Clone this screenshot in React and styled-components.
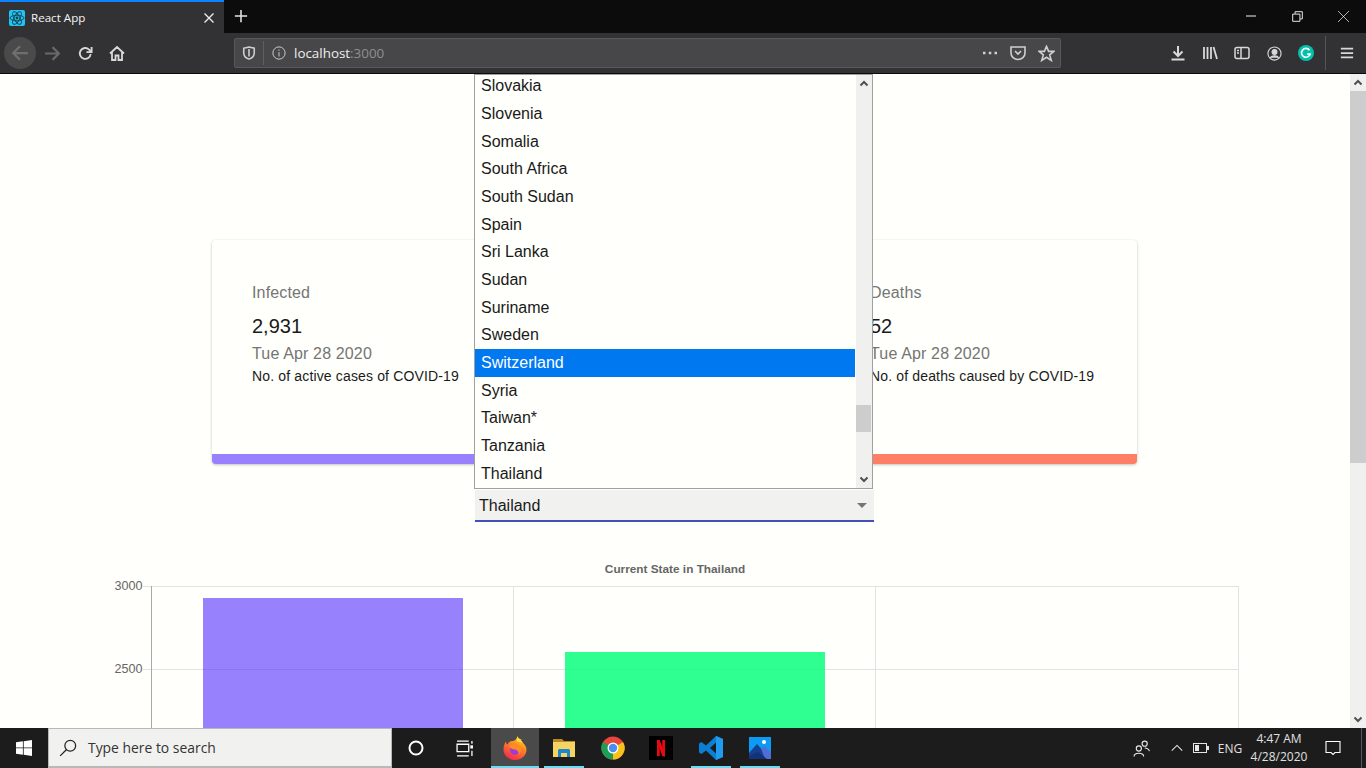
import React from 'react';
import styled, { createGlobalStyle } from 'styled-components';

const GlobalStyle = createGlobalStyle`
  html, body {
    margin: 0;
    padding: 0;
    height: 100%;
    overflow: hidden;
    background: #fffffb;
    font-family: "Liberation Sans", Arial, sans-serif;
  }
  #root { height: 100%; }
`;

const Shell = styled.div`
  height: 768px;
  display: flex;
  flex-direction: column;
  overflow: hidden;
`;

/* browser chrome */
const TabStrip = styled.div`
  height: 33px;
  flex: none;
  display: flex;
  align-items: flex-start;
  background: #0c0c0d;
  color: #f0f0f0;
`;

const Tab = styled.div`
  width: 224px;
  height: 33px;
  box-sizing: border-box;
  border-top: 2px solid #0a84ff;
  background: #323234;
  display: flex;
  align-items: center;
  padding: 0 9px;
  gap: 6px;
  font-family: "Open Sans", sans-serif;
  font-size: 11.6px;
  color: #f5f5f5;
`;

const TabTitle = styled.span`
  flex: 1;
`;

const IconSlot = styled.div`
  width: ${(p) => p.$w || 32}px;
  height: ${(p) => p.$h || 32}px;
  flex: none;
  display: flex;
  align-items: center;
  justify-content: center;
`;

const StripFill = styled.div`
  flex: 1;
`;

const NavBar = styled.div`
  height: 41px;
  flex: none;
  box-sizing: border-box;
  border-bottom: 1px solid #0c0c0d;
  background: #323234;
  display: flex;
  align-items: center;
  padding-left: 4px;
`;

const BackCircle = styled(IconSlot)`
  background: #4a4a4b;
  border-radius: 50%;
`;

const NavGap = styled.div`
  width: ${(p) => p.$w}px;
  flex: none;
`;

const UrlBar = styled.div`
  width: 827px;
  height: 30px;
  box-sizing: border-box;
  flex: none;
  display: flex;
  align-items: center;
  background: #474749;
  border: 1px solid #59595b;
  border-radius: 2px;
  font-family: "Open Sans", sans-serif;
  font-size: 13.4px;
  color: #eeeeee;
`;

const UrlDivider = styled.div`
  width: 1px;
  height: 24px;
  background: #5f5f62;
`;

const UrlText = styled.div`
  flex: 1;
  margin-left: 1px;
`;

const Port = styled.span`
  color: #8f8f92;
`;

const ToolDivider = styled.div`
  width: 1px;
  height: 34px;
  background: #55555a;
  margin: 0 5px 0 3px;
`;

/* page area */
const Viewport = styled.div`
  flex: 1;
  min-height: 0;
  display: flex;
`;

const Page = styled.main`
  flex: 1;
  min-width: 0;
  overflow: hidden;
  background: #fffffb;
  padding-top: 166px;
`;

const Cards = styled.div`
  width: 925px;
  margin-left: 212px;
  display: grid;
  grid-template-columns: repeat(3, 307px);
  gap: 2px;
`;

const Card = styled.article`
  height: 224px;
  box-sizing: border-box;
  background: #fffffb;
  border-bottom: 10px solid ${(p) => p.$accent};
  border-radius: 4px;
  box-shadow: 0 1px 3px rgba(0, 0, 0, 0.22), 0 0 2px rgba(0, 0, 0, 0.05);
  padding: 41px 40px 0;
`;

const CardLabel = styled.div`
  font-size: 16px;
  line-height: 24px;
  letter-spacing: 0.15px;
  color: #757575;
`;

const CardValue = styled.div`
  font-size: 20px;
  line-height: 28px;
  margin-top: 7px;
  color: #1a1a1a;
`;

const CardDate = styled.div`
  font-size: 16px;
  line-height: 24px;
  letter-spacing: 0.15px;
  margin-top: 2px;
  color: #757575;
`;

const CardNote = styled.div`
  font-size: 14px;
  line-height: 20px;
  letter-spacing: 0.15px;
  color: #1a1a1a;
  white-space: nowrap;
`;

const SelectBox = styled.div`
  position: relative;
  width: 399px;
  height: 32px;
  box-sizing: border-box;
  margin: 26px 0 0 475px;
  padding: 1px 4px 0;
  display: flex;
  align-items: center;
  justify-content: space-between;
  background: #f1f1ef;
  border-bottom: 2px solid #4350b5;
  font-size: 16px;
  color: #1a1a1a;
`;

const Caret = styled.div`
  width: 0;
  height: 0;
  margin-right: 3px;
  border-left: 5px solid transparent;
  border-right: 5px solid transparent;
  border-top: 5px solid #757575;
`;

const Dropdown = styled.div`
  position: absolute;
  left: -1px;
  bottom: 31px;
  width: 399px;
  height: 415px;
  box-sizing: border-box;
  display: flex;
  background: #fffffb;
  border: 1px solid #a0a0a0;
`;

const OptionList = styled.ul`
  flex: 1;
  margin: 0 1px 0 0;
  padding: 0;
  list-style: none;
  overflow: hidden;
`;

const Option = styled.li`
  height: 27.67px;
  line-height: 27.67px;
  padding: 0 6px;
  font-size: 16px;
  color: ${(p) => (p.$active ? '#ffffff' : '#1a1a1a')};
  background: ${(p) => (p.$active ? '#0078f0' : 'transparent')};
  &:first-child {
    margin-top: -2.6px;
  }
`;

const MiniScroll = styled.div`
  width: 16px;
  flex: none;
  display: flex;
  flex-direction: column;
  align-items: center;
  background: #f0f0ee;
  position: relative;
`;

const MiniThumb = styled.div`
  position: absolute;
  top: 330px;
  left: 0;
  width: 15px;
  height: 27px;
  background: #cdcdcd;
`;

const ArrowCap = styled.div`
  height: ${(p) => p.$h || 17}px;
  width: 100%;
  flex: none;
  display: flex;
  align-items: center;
  justify-content: center;
  margin-top: ${(p) => (p.$end ? 'auto' : '0')};
`;

const ChartWrap = styled.div`
  margin-top: 38px;
  margin-left: 100px;
`;

const PageScroll = styled.div`
  width: 16px;
  flex: none;
  display: flex;
  flex-direction: column;
  background: #f0f0ee;
`;

const PageThumb = styled.div`
  height: 372px;
  background: #cdcdcd;
`;

/* windows taskbar */
const Taskbar = styled.footer`
  height: 40px;
  flex: none;
  display: flex;
  align-items: stretch;
  background: #1c1c1c;
  color: #e8e8e8;
`;

const StartButton = styled(IconSlot)`
  height: 40px;
`;

const SearchBox = styled.div`
  width: 344px;
  box-sizing: border-box;
  flex: none;
  display: flex;
  align-items: center;
  gap: 11px;
  padding-left: 10px;
  background: #f1f1ef;
  border: 1px solid #b8b8b8;
  border-bottom-width: 2px;
  font-family: "Open Sans", sans-serif;
  font-size: 13.9px;
  color: #333333;
`;

const TaskApp = styled.div`
  width: ${(p) => p.$w || 48}px;
  flex: none;
  position: relative;
  display: flex;
  align-items: center;
  justify-content: center;
  background: ${(p) => (p.$active ? '#4a4a4a' : 'transparent')};
  &::after {
    content: '';
    display: ${(p) => (p.$open ? 'block' : 'none')};
    position: absolute;
    bottom: 0;
    left: 50%;
    width: ${(p) => (p.$active ? '100%' : '40px')};
    transform: translateX(-50%);
    height: 2px;
    background: #66dcf5;
  }
`;

const Tray = styled.div`
  margin-left: auto;
  display: flex;
  align-items: center;
  font-family: "Open Sans", sans-serif;
  font-size: 12px;
  color: #e0e0e0;
`;

const TrayItem = styled.div`
  width: ${(p) => p.$w}px;
  flex: none;
  display: flex;
  align-items: center;
  justify-content: center;
`;

const Clock = styled.div`
  width: 70px;
  flex: none;
  text-align: center;
  line-height: 18px;
`;

const Edge = styled.div`
  width: 5px;
  height: 40px;
  box-sizing: border-box;
  flex: none;
  border-left: 1px solid #5a5a5a;
`;

const countries = [
  'Slovakia', 'Slovenia', 'Somalia', 'South Africa', 'South Sudan', 'Spain', 'Sri Lanka', 'Sudan',
  'Suriname', 'Sweden', 'Switzerland', 'Syria', 'Taiwan*', 'Tanzania', 'Thailand',
];

const cards = [
  { label: 'Infected', value: '2,931', note: 'No. of active cases of COVID-19', accent: '#9980ff' },
  { label: 'Recovered', value: '2,609', note: 'No. of recoveries from COVID-19', accent: '#2dff8f' },
  { label: 'Deaths', value: '52', note: 'No. of deaths caused by COVID-19', accent: '#ff7f66' },
];

const Line = ({ children, size = 16, color = '#d4d4d4', width = 2 }) => (
  <svg width={size} height={size} viewBox="0 0 16 16" fill="none" stroke={color} strokeWidth={width}>
    {children}
  </svg>
);

const ReactIcon = () => (
  <svg width="16" height="16" viewBox="0 0 16 16">
    <rect width="16" height="16" rx="2" fill="#21c4f3" />
    <g fill="none" stroke="#12424f" strokeWidth="0.9">
      <ellipse cx="8" cy="8" rx="7" ry="2.8" />
      <ellipse cx="8" cy="8" rx="7" ry="2.8" transform="rotate(60 8 8)" />
      <ellipse cx="8" cy="8" rx="7" ry="2.8" transform="rotate(120 8 8)" />
    </g>
    <circle cx="8" cy="8" r="1.4" fill="#12424f" />
  </svg>
);

const Grammarly = () => (
  <svg width="16" height="16" viewBox="0 0 16 16">
    <circle cx="8" cy="8" r="8" fill="#05c0ac" />
    <path d="M11.5 5.2A4.4 4.4 0 1 0 12.2 9H9" fill="none" stroke="#ffffff" strokeWidth="1.6" />
  </svg>
);

const WindowsLogo = () => (
  <svg width="16" height="16" viewBox="0 0 16 16" fill="#ffffff">
    <path d="M0 2.3 6.9 1.3V7.5H0ZM7.7 1.2 16 0V7.5H7.7ZM0 8.3H6.9V14.7L0 13.7ZM7.7 8.3H16V16L7.7 14.8Z" />
  </svg>
);

const FirefoxLogo = () => (
  <svg width="24" height="24" viewBox="0 0 24 24">
    <defs>
      <linearGradient id="fx" x1="0.8" y1="0" x2="0.3" y2="1">
        <stop offset="0" stopColor="#ffe03c" />
        <stop offset="0.4" stopColor="#ff8a1f" />
        <stop offset="1" stopColor="#f5264f" />
      </linearGradient>
    </defs>
    <path d="M14.500 0c.5 2.500 2.500 3 4 3.500L18 5c3 2.500 5.500 5.500 5.500 8.500C23.500 19.500 18.500 24 12 24 5.500 24 .5 19.500.5 13.500.5 10 1.500 7.500 3 5.500 3 7 3.500 8 4.500 8.500 5.500 6.500 7 5 9 5c2 .5 4.500-1 5.500-5Z" fill="url(#fx)" />
    <circle cx="12" cy="14" r="5" fill="#a13bd6" />
    <path d="M6 10c2.500-2.500 9-3 11.500 1.500 1.500 3 0 6-2 7.500.8-2-.5-5-3.500-5.500-2.500-.3-5-1-6-3.500Z" fill="#ff8b24" />
    <path d="M14 1c1.500 2 4.500 3 6 6-2-1-4-1.500-6-1.500Z" fill="#ffe03c" />
  </svg>
);

const FolderLogo = () => (
  <svg width="22" height="18" viewBox="0 0 22 18">
    <path d="M0 0H9L11 2H22V5H0Z" fill="#b98a24" />
    <rect y="3" width="22" height="15" fill="#f7d360" />
    <path d="M5 18V11.500C5 10.500 6 10 7 10H15C16 10 17 10.500 17 11.500V18H14V14H8V18Z" fill="#1c86d1" />
  </svg>
);

const ChromeLogo = () => (
  <svg width="24" height="24" viewBox="0 0 24 24">
    <circle cx="12" cy="12" r="11.500" fill="#e8453c" />
    <path d="M12 12 22 6A11.500 11.500 0 0 1 12 23.500Z" fill="#f8c219" />
    <path d="M12 12 12 23.500A11.500 11.500 0 0 1 2 6Z" fill="#1f9d55" />
    <circle cx="12" cy="12" r="5.500" fill="#ffffff" />
    <circle cx="12" cy="12" r="4.200" fill="#4a8ef0" />
  </svg>
);

const NetflixLogo = () => (
  <svg width="24" height="24" viewBox="0 0 24 24">
    <rect width="24" height="24" fill="#000000" />
    <path d="M8 4H10.800L16 19.500V20.500L13.200 20Z" fill="#f50914" />
    <path d="M8 4H10.800V20L8 20.500ZM13.200 4H16V20.500L13.200 20Z" fill="#e50914" />
  </svg>
);

const CodeLogo = () => (
  <svg width="24" height="24" viewBox="0 0 24 24">
    <path d="M17 0 24 3V21L17 24 7 14.500 2.500 18 0 16.500V7.500L2.500 6 7 9.500ZM17 6.500 11 12 17 17.500Z" fill="#0a7fd4" fillRule="evenodd" />
    <path d="M17 0 24 3V21L17 24V17.500 6.500Z" fill="#1f9cf0" />
  </svg>
);

const PhotosLogo = () => (
  <svg width="22" height="22" viewBox="0 0 22 22">
    <rect width="22" height="22" fill="#0c9af5" />
    <circle cx="15" cy="5" r="2" fill="#ffffff" />
    <path d="M0 16 8 7 16 16V22H0Z" fill="#173f8f" />
    <path d="M12 11.500 15 9 22 15V22H16Z" fill="#4f6fd6" />
    <path d="M0 19 9 15 18 22H0Z" fill="#12337a" />
  </svg>
);

const Chevron = ({ up }) => (
  <svg width="10" height="7" viewBox="0 0 10 7" fill="none" stroke="#505050" strokeWidth="2">
    <path d={up ? 'M1.500 5.500 5 2l3.500 3.500' : 'M1.500 1.500 5 5l3.500-3.500'} />
  </svg>
);

function Chart() {
  const ticks = [
    { y: 586, label: '3000' },
    { y: 669, label: '2500' },
  ];
  return (
    <svg width="1150" height="168" viewBox="100 560 1150 168">
      <text x="675" y="572.500" textAnchor="middle" fontFamily="Liberation Sans" fontSize="11.8" fontWeight="700" fill="#666666">
        Current State in Thailand
      </text>
      {ticks.map((t) => (
        <g key={t.label}>
          <line x1="143" x2="1238" y1={t.y + 0.5} y2={t.y + 0.5} stroke="#e2e2e0" />
          <text x="142.500" y={t.y + 4} textAnchor="end" fontFamily="Liberation Sans" fontSize="12.6" fill="#666666">
            {t.label}
          </text>
        </g>
      ))}
      <line x1="151.500" x2="151.500" y1="586" y2="728" stroke="#a8a8a8" />
      {[513, 875, 1238].map((x) => (
        <line key={x} x1={x + 0.5} x2={x + 0.5} y1="586" y2="728" stroke="#e2e2e0" />
      ))}
      <rect x="203" y="598" width="260" height="130" fill="#4d26ff" fillOpacity="0.58" />
      <rect x="565" y="652" width="260" height="76" fill="#00ff77" fillOpacity="0.82" />
    </svg>
  );
}

export default function App() {
  return (
    <Shell>
      <GlobalStyle />
      <TabStrip>
        <Tab>
          <ReactIcon />
          <TabTitle>React App</TabTitle>
          <Line size={12} color="#ececec" width={1.800}>
            <path d="M2 2 14 14M14 2 2 14" />
          </Line>
        </Tab>
        <IconSlot $w={34} $h={32}>
          <Line size={14} color="#e4e4e4" width={1.800}>
            <path d="M8 1V15M1 8H15" />
          </Line>
        </IconSlot>
        <StripFill />
        <IconSlot $w={46} $h={31}>
          <Line size={10} color="#ffffff" width={1.500}>
            <path d="M0 8H16" />
          </Line>
        </IconSlot>
        <IconSlot $w={46} $h={32}>
          <Line size={11} color="#ffffff" width={1.300}>
            <path d="M1 4.500H11.500V15H1ZM4.500 4V1H15V11.500H12" />
          </Line>
        </IconSlot>
        <IconSlot $w={46} $h={32}>
          <Line size={11} color="#ffffff" width={1}>
            <path d="M0 0 16 16M16 0 0 16" />
          </Line>
        </IconSlot>
      </TabStrip>

      <NavBar>
        <BackCircle>
          <Line size={18} color="#6f6f71">
            <path d="M15 8H2M8 2 2 8l6 6" />
          </Line>
        </BackCircle>
        <IconSlot $w={33}>
          <Line size={17} color="#69696b">
            <path d="M1 8H14M8 2l6 6-6 6" />
          </Line>
        </IconSlot>
        <IconSlot>
          <Line size={15} color="#d8d8d8">
            <path d="M13.500 8.500A5.800 5.800 0 1 1 11.800 3.800L14 6M14.500 1V6.500H9" />
          </Line>
        </IconSlot>
        <IconSlot>
          <Line size={16} color="#d8d8d8" width={1.800}>
            <path d="M1 8.500 8 2l7 6.500M3 7V15H6.500V10.500H9.500V15H13V7" />
          </Line>
        </IconSlot>
        <NavGap $w={101} />
        <UrlBar>
          <IconSlot $w={28} $h={28}>
            <Line size={14} color="#cfcfcf" width={1.800}>
              <path d="M2 2.500 8 1.200 14 2.500V8C14 11.500 11 14 8 15 5 14 2 11.500 2 8ZM8 3.500V12" />
            </Line>
          </IconSlot>
          <UrlDivider />
          <IconSlot $w={29} $h={28}>
            <Line size={14} color="#cfcfcf" width={1.100}>
              <circle cx="8" cy="8" r="7" />
              <path d="M8 7V12M8 4V5.500" />
            </Line>
          </IconSlot>
          <UrlText>
            localhost<Port>:3000</Port>
          </UrlText>
          <IconSlot $w={28} $h={28}>
            <Line size={16} color="#cfcfcf" width={2.600}>
              <path d="M1 8H3.500M6.800 8H9.300M12.500 8H15" />
            </Line>
          </IconSlot>
          <IconSlot $w={28} $h={28}>
            <Line size={16} color="#cfcfcf" width={1.600}>
              <path d="M1 2H15V8A7 6.500 0 0 1 1 8ZM5 6 8 9l3-3" />
            </Line>
          </IconSlot>
          <IconSlot $w={28} $h={28}>
            <Line size={17} color="#cfcfcf" width={1.500}>
              <path d="M8 1.300 10 6H15L11 9.300 12.500 14.500 8 11.500 3.500 14.500 5 9.300 1 6H6Z" />
            </Line>
          </IconSlot>
        </UrlBar>
        <NavGap $w={101} />
        <IconSlot>
          <Line size={16} color="#d8d8d8">
            <path d="M8 1V10.500M3.500 6.500 8 11l4.500-4.500M1.500 14.500H14.500" />
          </Line>
        </IconSlot>
        <IconSlot>
          <Line size={16} color="#d8d8d8" width={1.800}>
            <path d="M2 2V14M5.500 2V14M9 2V14M11.500 2 15 14" />
          </Line>
        </IconSlot>
        <IconSlot>
          <Line size={16} color="#d8d8d8" width={1.500}>
            <rect x="1" y="2.500" width="14" height="11" rx="2" />
            <path d="M7 2.500V13.500M3 5.500H5M3 8H5" />
          </Line>
        </IconSlot>
        <IconSlot>
          <Line size={15} color="#d8d8d8" width={1.200}>
            <circle cx="8" cy="8" r="7" />
            <circle cx="8" cy="6.300" r="2.600" fill="#d8d8d8" />
            <path d="M3.500 12.500C5 9.800 11 9.800 12.500 12.500" fill="#d8d8d8" />
          </Line>
        </IconSlot>
        <IconSlot>
          <Grammarly />
        </IconSlot>
        <ToolDivider />
        <IconSlot $w={32}>
          <Line size={14} color="#d8d8d8" width={2}>
            <path d="M1 3H15M1 8H15M1 13H15" />
          </Line>
        </IconSlot>
      </NavBar>

      <Viewport>
        <Page>
          <Cards>
            {cards.map((c) => (
              <Card key={c.label} $accent={c.accent}>
                <CardLabel>{c.label}</CardLabel>
                <CardValue>{c.value}</CardValue>
                <CardDate>Tue Apr 28 2020</CardDate>
                <CardNote>{c.note}</CardNote>
              </Card>
            ))}
          </Cards>
          <SelectBox>
            Thailand
            <Caret />
            <Dropdown>
              <OptionList>
                {countries.map((name) => (
                  <Option key={name} $active={name === 'Switzerland'}>
                    {name}
                  </Option>
                ))}
              </OptionList>
              <MiniScroll>
                <ArrowCap>
                  <Chevron up />
                </ArrowCap>
                <MiniThumb />
                <ArrowCap $end>
                  <Chevron />
                </ArrowCap>
              </MiniScroll>
            </Dropdown>
          </SelectBox>
          <ChartWrap>
            <Chart />
          </ChartWrap>
        </Page>
        <PageScroll>
          <ArrowCap>
            <Chevron up />
          </ArrowCap>
          <PageThumb />
          <ArrowCap $end>
            <Chevron />
          </ArrowCap>
        </PageScroll>
      </Viewport>

      <Taskbar>
        <StartButton $w={48}>
          <WindowsLogo />
        </StartButton>
        <SearchBox>
          <Line size={18} color="#222222" width={1.100}>
            <circle cx="10" cy="6" r="4.800" />
            <path d="M6.500 9.500 1 15" />
          </Line>
          Type here to search
        </SearchBox>
        <TaskApp $w={48}>
          <Line size={16} color="#ffffff" width={2}>
            <circle cx="8" cy="8" r="6.500" />
          </Line>
        </TaskApp>
        <TaskApp $w={48}>
          <Line size={17} color="#ffffff" width={1.200}>
            <path d="M1 1H12M1 4H12V11H1ZM1 15H12M15 1V3.500" />
            <rect x="13.500" y="5" width="3" height="3" fill="#ffffff" stroke="none" />
            <path d="M15 10V15" />
          </Line>
        </TaskApp>
        <NavGap $w={3} />
        <TaskApp $active $open>
          <FirefoxLogo />
        </TaskApp>
        <TaskApp $open $w={50}>
          <FolderLogo />
        </TaskApp>
        <TaskApp $w={48}>
          <ChromeLogo />
        </TaskApp>
        <TaskApp $w={48}>
          <NetflixLogo />
        </TaskApp>
        <TaskApp $open $w={52}>
          <CodeLogo />
        </TaskApp>
        <TaskApp $open $w={46}>
          <PhotosLogo />
        </TaskApp>
        <Tray>
          <TrayItem $w={24}>
            <Line size={17} color="#e6e6e6" width={1.100}>
              <circle cx="5.500" cy="8" r="2.400" />
              <path d="M1 15.500C1 11.500 10 11.500 10 15.500" />
              <circle cx="11" cy="3.500" r="2.400" />
              <path d="M11 7.500C13 7.500 14.800 8.500 15.500 10.500" />
            </Line>
          </TrayItem>
          <NavGap $w={12} />
          <TrayItem $w={24}>
            <Line size={14} color="#e6e6e6" width={1.200}>
              <path d="M2 11 8 5l6 6" />
            </Line>
          </TrayItem>
          <TrayItem $w={24}>
            <svg width="16" height="10" viewBox="0 0 16 10" fill="none">
              <rect x="0.500" y="0.500" width="13" height="9" stroke="#e6e6e6" />
              <rect x="2" y="2" width="4" height="6" fill="#e6e6e6" />
              <rect x="14" y="3" width="2" height="4" fill="#e6e6e6" />
            </svg>
          </TrayItem>
          <NavGap $w={3} />
          <TrayItem $w={28}>ENG</TrayItem>
          <Clock>
            4:47 AM
            <br />
            4/28/2020
          </Clock>
          <TrayItem $w={38}>
            <Line size={16} color="#ffffff" width={1.100}>
              <path d="M1 1.500H15V12.500H10L8 14.500 6 12.500H1Z" />
            </Line>
          </TrayItem>
          <NavGap $w={9} />
          <Edge />
        </Tray>
      </Taskbar>
    </Shell>
  );
}
